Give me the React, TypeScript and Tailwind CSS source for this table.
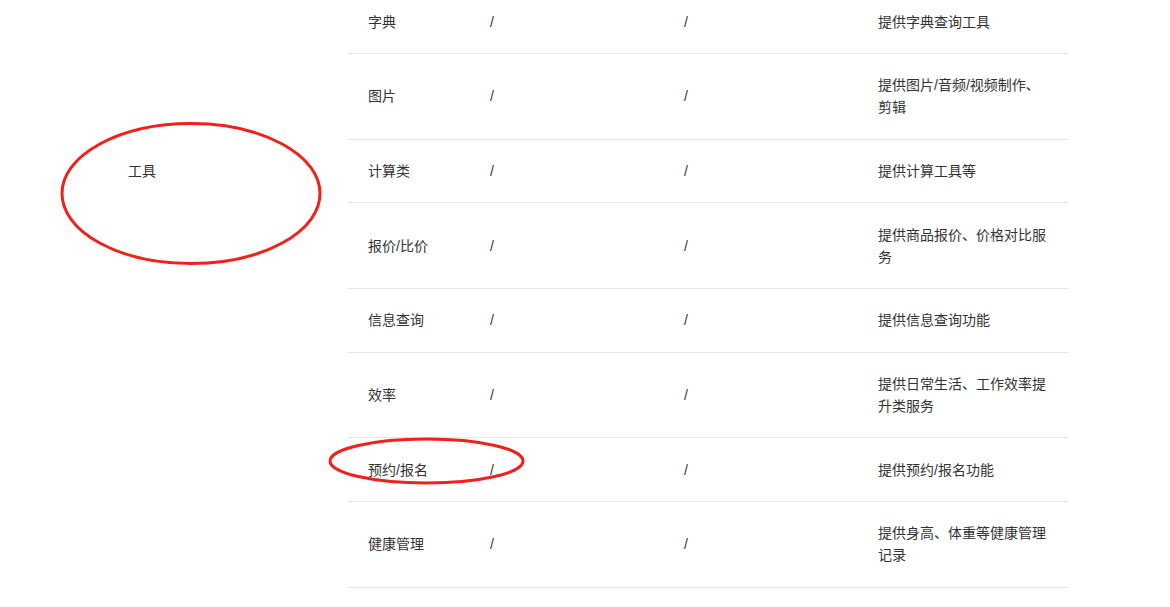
const rows = [
  { name: "字典", desc: "提供字典查询工具" },
  { name: "图片", desc: "提供图片/音频/视频制作、剪辑" },
  { name: "计算类", desc: "提供计算工具等" },
  { name: "报价/比价", desc: "提供商品报价、价格对比服务" },
  { name: "信息查询", desc: "提供信息查询功能" },
  { name: "效率", desc: "提供日常生活、工作效率提升类服务" },
  { name: "预约/报名", desc: "提供预约/报名功能" },
  { name: "健康管理", desc: "提供身高、体重等健康管理记录" },
];

const App = () => {
  return (
    <div className="relative w-[1170px] h-[607px] overflow-hidden bg-white text-[14px] leading-[22px] text-[#333] font-['Liberation_Sans','Noto_Sans_CJK_SC',sans-serif]">
      <div className="flex mt-[-9.67px]">
        <div className="w-[348px] shrink-0 pl-[128px] pt-[170px]">工具</div>
        <div className="w-[720px]">
          {rows.map((r) => (
            <div
              key={r.name}
              className="grid grid-cols-[122px_194px_194px_210px] border-b border-[#e5e5e5] items-center"
            >
              <div className="px-[20px] py-[20.33px]">{r.name}</div>
              <div className="px-[20px] py-[20.33px]">/</div>
              <div className="px-[20px] py-[20.33px]">/</div>
              <div className="px-[20px] py-[20.33px]">{r.desc}</div>
            </div>
          ))}
        </div>
      </div>

      <svg
        className="absolute left-0 top-0 pointer-events-none"
        width="1170"
        height="607"
        viewBox="0 0 1170 607"
      >
        <ellipse cx="191" cy="193.5" rx="129" ry="70" fill="none" stroke="#f2201a" strokeWidth="3" />
        <ellipse cx="426.5" cy="461" rx="96.5" ry="22" fill="none" stroke="#f2201a" strokeWidth="3" />
      </svg>
    </div>
  );
};

export default App;
